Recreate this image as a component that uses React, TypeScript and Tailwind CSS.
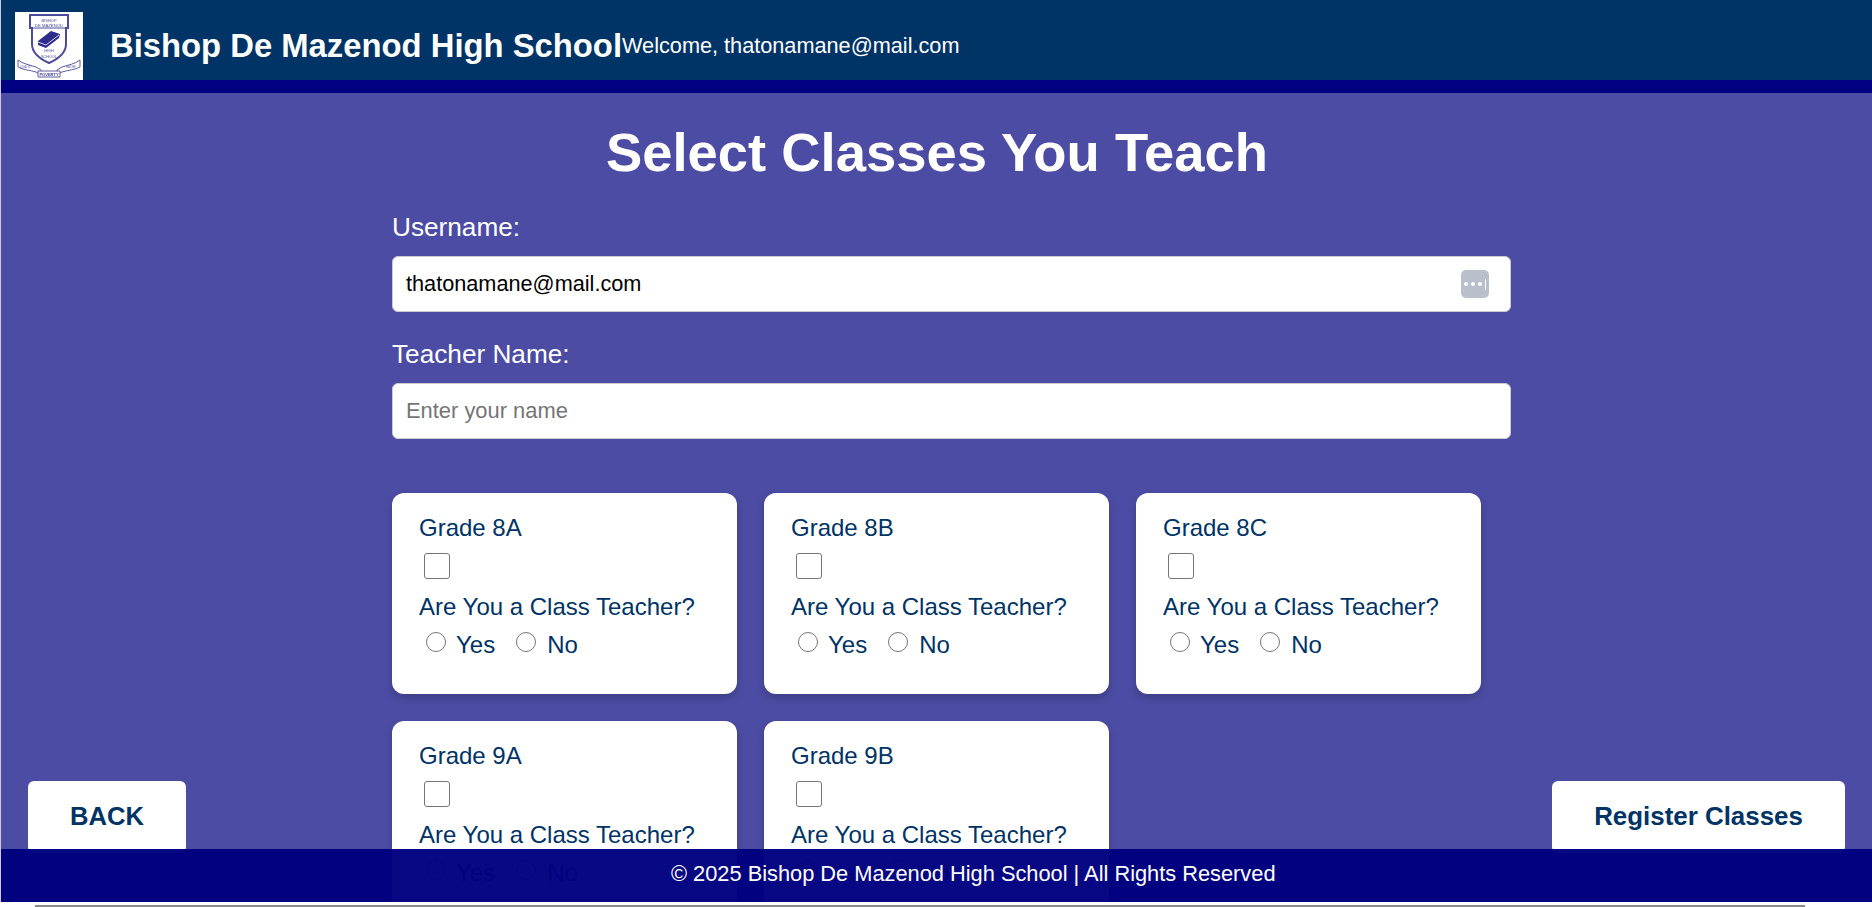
const classes = ["Grade 8A", "Grade 8B", "Grade 8C", "Grade 9A", "Grade 9B"];

const Logo = () => (
  <div className="h-[68px] w-[68px] shrink-0 bg-white">
    <svg viewBox="0 0 68 68" className="h-full w-full blur-[0.3px]" fontFamily="Liberation Sans, sans-serif">
      <path d="M15 3h38v13h-2v16c0 9-8 15-17 19-9-4-17-10-17-19V16h-2z" fill="#fff" stroke="#4b4a9c" strokeWidth="2" />
      <path d="M17 16h34" stroke="#4b4a9c" strokeWidth="1" />
      <text x="34" y="9.5" textAnchor="middle" fontSize="4" fill="#4b4a9c">BISHOP</text>
      <text x="34" y="15" textAnchor="middle" fontSize="4.2" fill="#4b4a9c">DE MAZENOD</text>
      <path d="M23 29l13-10 9 3-1 4-13 10-8-3z" fill="#2f2b8c" />
      <path d="M23 30l8 3 13-10" stroke="#fff" strokeWidth="0.8" fill="none" />
      <text x="34" y="40" textAnchor="middle" fontSize="3.8" fill="#4b4a9c">HIGH</text>
      <text x="34" y="46" textAnchor="middle" fontSize="3.8" fill="#4b4a9c">SCHOOL</text>
      <path d="M3 48c5 4 12 5 18 7l5 3 1 5-6-3c-6-2-13-2-18-5z" fill="#fff" stroke="#5f5ea6" strokeWidth="1" />
      <path d="M65 48c-5 4-12 5-18 7l-5 3-1 5 6-3c6-2 13-2 18-5z" fill="#fff" stroke="#5f5ea6" strokeWidth="1" />
      <path d="M23 59h22v6H23z" fill="#fff" stroke="#5f5ea6" strokeWidth="1" />
      <text x="11" y="56" fontSize="2.8" fill="#5f5ea6" textAnchor="middle">QUALITY</text>
      <text x="56" y="56" fontSize="2.8" fill="#5f5ea6" textAnchor="middle">RACHE</text>
      <text x="34" y="64" textAnchor="middle" fontSize="4" fontWeight="bold" fill="#3f3e90">POVERTY</text>
    </svg>
  </div>
);

const ClassCard = ({ name }: { name: string }) => (
  <div className="h-[201px] w-[345px] rounded-[12px] bg-white px-[27px] pt-[21px] text-[24px] leading-[28px] text-[#003366] shadow-[0_4px_8px_rgba(0,0,0,0.2)]">
    <div>{name}</div>
    <div className="mt-[11px] ml-[5px] h-[26px] w-[26px] rounded-[3px] border-[1.5px] border-[#767676] bg-white" />
    <div className="mt-[14px]">Are You a Class Teacher?</div>
    <div className="mt-[8px] flex items-start">
      <span className="mt-[3px] ml-[7px] h-[20px] w-[20px] rounded-full border-[1.5px] border-[#767676] bg-white" />
      <span className="ml-[10px] mt-[2px]">Yes</span>
      <span className="mt-[3px] ml-[21px] h-[20px] w-[20px] rounded-full border-[1.5px] border-[#767676] bg-white" />
      <span className="ml-[11px] mt-[2px]">No</span>
    </div>
  </div>
);

export default function App() {
  return (
    <div className="relative h-[907px] overflow-hidden bg-white font-['Liberation_Sans',Arial,sans-serif]">
      <div className="h-full overflow-hidden border-l border-l-[#c9c9d8] bg-[#4c4ca4]">
        <header className="flex h-[93px] items-start border-b-[13px] border-b-[#000080] bg-[#003366] pl-[14px] pt-[12px] text-white">
          <Logo />
          <h1 className="ml-[27px] mt-[15px] whitespace-nowrap text-[32.8px] font-bold leading-[37px]">Bishop De Mazenod High School</h1>
          <p className="mt-[21px] whitespace-nowrap text-[21.7px] leading-[26px]">Welcome, thatonamane@mail.com</p>
        </header>

        <main className="ml-[391px] w-[1119px]">
          <h2 className="mt-[28px] ml-[-29px] text-center text-[54.4px] font-bold leading-[64px] text-white">Select Classes You Teach</h2>

          <label className="mt-[27px] block text-[26.2px] leading-[30px] text-white">Username:</label>
          <div className="mt-[14px] flex h-[56px] items-center justify-between rounded-[6px] border border-[#ccc] bg-white pl-[13px] pr-[21px] text-[21.7px] text-black">
            <span>thatonamane@mail.com</span>
            <div className="flex h-[28px] w-[28px] items-center justify-center gap-[3px] rounded-[5px] bg-[#b9c0cc]">
              <span className="h-[4px] w-[4px] rounded-full bg-white" />
              <span className="h-[4px] w-[4px] rounded-full bg-white" />
              <span className="h-[4px] w-[4px] rounded-full bg-white" />
              <span className="h-[11px] w-px bg-white" />
            </div>
          </div>

          <label className="mt-[27px] block text-[26.2px] leading-[30px] text-white">Teacher Name:</label>
          <div className="mt-[14px] flex h-[56px] items-center rounded-[6px] border border-[#ccc] bg-white px-[13px] text-[21.9px] text-[#757575]">
            Enter your name
          </div>

          <div className="mt-[54px] flex flex-wrap gap-[27px]">
            {classes.map((c) => (
              <ClassCard key={c} name={c} />
            ))}
          </div>
        </main>
      </div>

      {/* fixed actions, the footer sits over them */}
      <button className="absolute left-[28px] top-[781px] h-[72px] w-[158px] rounded-[6px] bg-white pb-[2px] text-[25.6px] font-bold text-[#003366]">BACK</button>
      <button className="absolute left-[1552px] top-[781px] h-[72px] w-[293px] rounded-[6px] bg-white pb-[2px] text-[25.9px] font-bold text-[#003366]">Register Classes</button>

      <footer className="absolute left-px right-0 top-[849px] flex h-[53px] items-center bg-[#000080]/[0.97] pb-[2px] pl-[670px] text-[21.8px] text-white">
        © 2025 Bishop De Mazenod High School | All Rights Reserved
      </footer>
      <div className="absolute bottom-0 left-0 right-0 h-[5px] bg-white">
        <div className="ml-[35px] mt-[3px] h-[2px] w-[1770px] bg-[#8a8a8a]" />
      </div>
    </div>
  );
}
